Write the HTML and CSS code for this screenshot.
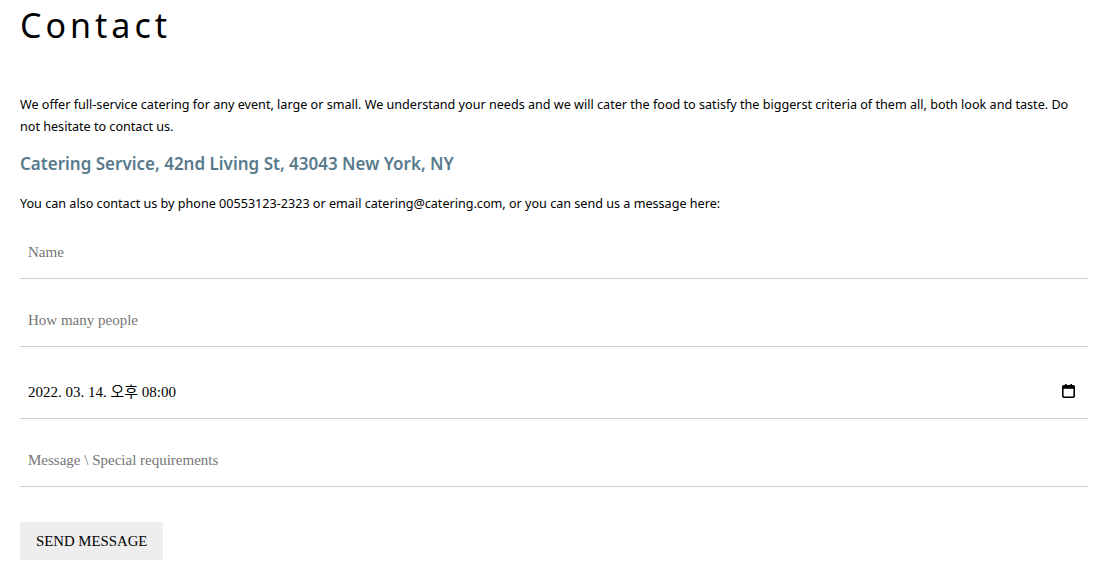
FILE: index.html
```html
<!DOCTYPE html>
<html lang="en">
<head>
    <meta charset="UTF-8">
    <meta name="viewport" content="width=device-width, initial-scale=1.0">
    <title>Contact</title>
    <link rel="stylesheet" href="styles.css">
</head>
<body>
    <div class="contact" id="contact">
        <h1 class="title">Contact</h1>
        <p class="intro">We offer full-service catering for any event, large or small. We understand your needs and we will cater the food to satisfy the biggerst criteria of them all, both look and taste. Do not hesitate to contact us.</p>
        <p class="address">Catering Service, 42nd Living St, 43043 New York, NY</p>
        <p class="intro">You can also contact us by phone 00553123-2323 or email catering@catering.com, or you can send us a message here:</p>

        <form class="contact-form" action="#" onsubmit="return false">
            <div class="field">
                <input class="input" type="text" placeholder="Name" name="Name">
            </div>
            <div class="field">
                <input class="input" type="number" placeholder="How many people" name="People">
            </div>
            <div class="field field-date">
                <input class="input" type="text" value="2022. 03. 14. 오후 08:00" name="date">
                <svg class="calendar" width="13" height="14" viewBox="0 0 13 14" aria-hidden="true">
                    <rect x="3" y="0" width="1.6" height="2.5" fill="#000"/>
                    <rect x="8.4" y="0" width="1.6" height="2.5" fill="#000"/>
                    <rect x="0.8" y="1.8" width="11.4" height="11.4" rx="1" fill="none" stroke="#000" stroke-width="1.6"/>
                    <rect x="0.8" y="2" width="11.4" height="2.8" fill="#000"/>
                </svg>
            </div>
            <div class="field">
                <input class="input" type="text" placeholder="Message \ Special requirements" name="Message">
            </div>
            <button class="button" type="submit">SEND MESSAGE</button>
        </form>
    </div>
</body>
</html>
```

FILE: styles.css
```css
body {
    margin: 0;
    padding: 0 26px 0 20px;
    background: #fff;
    color: #000;
    font-family: "Noto Sans", "Noto Sans CJK KR", sans-serif;
}

.title {
    margin: 0;
    padding-top: 2px;
    font-size: 34px;
    font-weight: 400;
    letter-spacing: 4px;
    line-height: normal;
}

.intro {
    margin: 46px 0 0;
    font-size: 12.6px;
    line-height: 22px;
}

.address {
    margin: 12px 0 0;
    font-size: 17px;
    line-height: 27px;
    font-weight: 600;
    color: #587a8c;
}

.address + .intro {
    margin-top: 16px;
}

.contact-form {
    margin-top: 12px;
}

.field {
    display: flex;
    align-items: center;
    height: 52px;
    margin-bottom: 16px;
    border-bottom: 1px solid #ccc;
    box-sizing: border-box;
}

.field-date {
    height: 56px;
}

.input {
    flex: 1;
    height: 100%;
    padding: 0 8px;
    border: none;
    outline: none;
    background: transparent;
    font-family: "Liberation Serif", "Noto Sans CJK KR", serif;
    font-size: 15px;
    color: #000;
    -moz-appearance: textfield;
}

.input::-webkit-outer-spin-button,
.input::-webkit-inner-spin-button {
    -webkit-appearance: none;
    margin: 0;
}

.input::placeholder {
    color: #757575;
}

.calendar {
    margin-right: 13px;
    flex: none;
}

.button {
    margin-top: 19px;
    height: 38px;
    padding: 0 16px;
    border: none;
    background-color: #eee;
    font-family: "Liberation Serif", serif;
    font-size: 14.8px;
    white-space: nowrap;
    color: #000;
    cursor: pointer;
}

.button:hover {
    background-color: #ccc;
}
```
